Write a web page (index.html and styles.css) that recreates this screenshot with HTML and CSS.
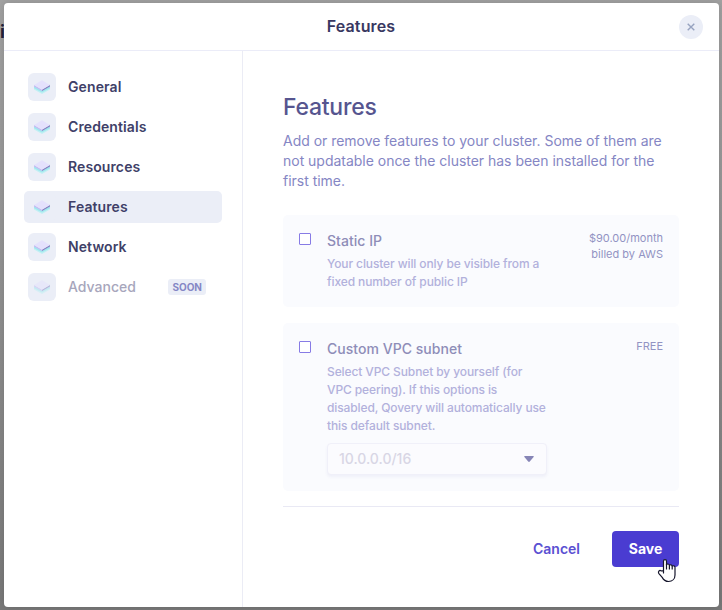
FILE: index.html
```html
<!DOCTYPE html>
<html lang="en">
<head>
<meta charset="utf-8">
<title>Features</title>
<link rel="stylesheet" href="styles.css">
</head>
<body>
<span class="behind">i</span>
<svg class="defs" width="0" height="0" aria-hidden="true">
  <symbol id="layers" viewBox="0 0 16 14">
    <path d="M0 6.500l8 4 8-4v3L8 14 0 9.500z" fill="#c2f0f4"/>
    <path d="M0 6l8 4.500L16 6v2.300L8 12.500 0 8.300z" fill="#a0e7ee"/>
    <path d="M0 5l8 4.500v1.500L0 6.500z" fill="#c4b9f3"/>
    <path d="M16 4.800L8 9.500v1.500l8-4.500z" fill="#8781c2"/>
    <path d="M8 .3L16 5 8 9.700 0 5z" fill="#e4e1fc"/>
  </symbol>
</svg>
<div class="modal">
  <header class="header">
    <h1 class="header-title">Features</h1>
    <button class="close" aria-label="Close"><svg width="8" height="8" viewBox="0 0 8 8"><path d="M.7.7l6.600 6.600M7.300.7L.7 7.300" stroke="#97a3c0" stroke-width="1.400"/></svg></button>
  </header>
  <div class="body">
    <nav class="nav">
      <a class="item"><span class="icon"><svg><use href="#layers"/></svg></span><span class="label">General</span></a>
      <a class="item"><span class="icon"><svg><use href="#layers"/></svg></span><span class="label">Credentials</span></a>
      <a class="item"><span class="icon"><svg><use href="#layers"/></svg></span><span class="label">Resources</span></a>
      <a class="item active"><span class="icon"><svg><use href="#layers"/></svg></span><span class="label">Features</span></a>
      <a class="item"><span class="icon"><svg><use href="#layers"/></svg></span><span class="label">Network</span></a>
      <a class="item disabled"><span class="icon"><svg><use href="#layers"/></svg></span><span class="label">Advanced</span><span class="badge">SOON</span></a>
    </nav>
    <main class="main">
      <h2 class="title">Features</h2>
      <p class="intro">Add or remove features to your cluster. Some of them are<br>not updatable once the cluster has been installed for the<br>first time.</p>
      <section class="card">
        <span class="check"></span>
        <div class="info">
          <h3 class="name">Static IP</h3>
          <p class="desc">Your cluster will only be visible from a<br>fixed number of public IP</p>
        </div>
        <div class="price">$90.00/month<br>billed by AWS</div>
      </section>
      <section class="card tall">
        <span class="check"></span>
        <div class="info">
          <h3 class="name">Custom VPC subnet</h3>
          <p class="desc">Select VPC Subnet by yourself (for<br>VPC peering). If this options is<br>disabled, Qovery will automatically use<br>this default subnet.</p>
          <div class="select"><span>10.0.0.0/16</span><svg width="10" height="6" viewBox="0 0 10 6"><path d="M1 0h8q1.300.1.600 1L5.800 5.600q-.8.600-1.600 0L.4 1Q-.3.100 1 0z" fill="#8685b6"/></svg></div>
        </div>
        <div class="price">FREE</div>
      </section>
      <footer class="footer">
        <button class="cancel">Cancel</button>
        <button class="save">Save</button>
      </footer>
    </main>
  </div>
</div>
<svg class="cursor" width="19" height="25" viewBox="0 0 19 25"><path d="M6.500 15V3.200c0-2.200 3-2.200 3 0V7c.3-1.500 2.900-1.300 2.900.5.500-1.200 2.800-.9 2.800.8.600-1 2.800-.5 2.800 1V17c0 3.800-2.700 6.500-6.500 6.500-3.300 0-4.900-1.500-6.300-4.100L1.700 15.300c-1-2 1-3.500 2.300-2.400h2.500z" fill="#fff" stroke="#15152b" stroke-width="1.200" stroke-linejoin="round"/><path d="M9.500 6v5.500M12.400 7.500v4M15.200 8.300v3.200" stroke="#15152b" stroke-width="1.200"/></svg>
</body>
</html>
```
FILE: styles.css
```css
* { box-sizing: border-box; margin: 0; padding: 0; }
body {
  width: 722px; height: 610px; overflow: hidden; position: relative;
  padding: 3px 3px 4px 4px;
  background: linear-gradient(#a2a2a2, #999 30%, #797979);
  font-family: Inter, Roboto, "Liberation Sans", sans-serif;
}
button { font: inherit; border: 0; background: none; }
.defs { position: absolute; }
.behind { position: absolute; left: 0; top: 21px; font-size: 18px; font-weight: 700; line-height: 22px; color: #24223a; }
.modal { position: relative; width: 715px; height: 604px; background: #fff; border-radius: 4px; box-shadow: 0 0 8px rgba(0,0,0,.15); overflow: hidden; }
.header { height: 48px; border-bottom: 1px solid #ebecf8; display: flex; align-items: center; justify-content: flex-end; padding-right: 16px; }
.header-title { flex: 1; padding: 0 0 2px 15px; text-align: center; margin-right: -24px; font-size: 16px; font-weight: 600; letter-spacing: .12px; color: #383761; }
.close { width: 24px; height: 24px; border-radius: 50%; background: #ebeef7; display: flex; align-items: center; justify-content: center; }
.body { display: flex; height: 556px; }
.nav { width: 239px; border-right: 1px solid #ebecf5; padding: 20px 20px 0; display: flex; flex-direction: column; gap: 8px; }
.item { height: 32px; flex: none; display: flex; align-items: center; padding: 0 16px 0 4px; border-radius: 5px; color: #403f68; }
.active { background: #ebeef7; }
.icon { width: 28px; height: 28px; border-radius: 6px; background: #ebeef7; display: flex; align-items: center; justify-content: center; margin-right: 12px; }
.icon svg { width: 16px; height: 14px; }
.label { flex: 1; font-size: 14px; font-weight: 600; line-height: 20px; letter-spacing: .1px; }
.disabled .label { color: #a7a6bc; font-weight: 550; letter-spacing: 0; }
.disabled .icon svg { opacity: .5; }
.badge { height: 16px; padding: 0 4px; border-radius: 3px; background: #ebeef7; color: #8587c5; font-size: 10px; font-weight: 700; line-height: 17px; }
.main { flex: 1; padding: 40px 40px 0; }
.title { font-size: 23px; font-weight: 550; line-height: 32px; letter-spacing: -.25px; color: #56558f; }
.intro { margin-top: 8px; font-size: 14px; line-height: 20px; letter-spacing: -.02px; color: #8586c4; white-space: nowrap; }
.card { height: 92px; margin-top: 24px; padding: 16px; display: flex; background: #fafbfe; border-radius: 5px; }
.tall { height: 168px; margin-top: 16px; }
.check { width: 12px; height: 12px; flex: none; margin: 2px 16px 0 0; border: 1px solid #877be5; border-radius: 1px; background: #fff; }
.info { width: 220px; white-space: nowrap; }
.name { font-size: 14px; font-weight: 550; line-height: 20px; letter-spacing: .03px; color: #8e8db8; }
.desc { margin-top: 4px; font-size: 12px; font-weight: 450; line-height: 18px; letter-spacing: -.11px; color: #b2b1dc; }
.price { flex: 1; margin-top: -1px; text-align: right; font-size: 11px; line-height: 16px; color: #9293c3; white-space: nowrap; }
.select { height: 32px; margin-top: 8px; padding: 0 12px 1px 11px; display: flex; align-items: center; justify-content: space-between; border: 1px solid #f0f0f9; border-radius: 4px; background: #fbfbfe; box-shadow: 0 2px 3px rgba(100,100,180,.07); color: #d8d6e5; font-size: 14px; font-weight: 500; }
.footer { margin-top: 15px; border-top: 1px solid #e9e9f4; padding-top: 24px; display: flex; justify-content: flex-end; font-size: 14px; }
.cancel { height: 36px; margin-right: 32px; padding-bottom: 2px; color: #5a50d2; font-weight: 600; }
.save { width: 67px; height: 36px; padding-bottom: 2px; border-radius: 4px; background: #4a3cd1; color: #fff; font-weight: 700; }
.cursor { position: absolute; left: 657px; top: 558px; }
```
